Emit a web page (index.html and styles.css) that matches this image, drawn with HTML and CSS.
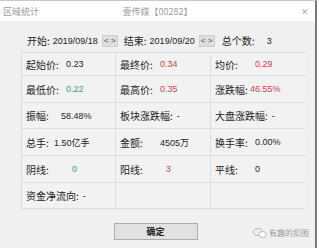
FILE: index.html
```html
<!DOCTYPE html>
<html lang="zh-CN">
<head>
    <meta charset="UTF-8">
    <title>区域统计</title>
    <link rel="stylesheet" href="styles.css">
</head>
<body>
<div class="window">
    <div class="titlebar">
        <span class="title-left">区域统计</span>
        <span class="title-mid">壹传媒【00282】</span>
        <span class="title-close">&#x2715;</span>
    </div>

    <div class="content">
        <div class="daterow">
            <span class="lbl">开始:</span>
            <span class="num date">2019/09/18</span>
            <span class="spin">&lt; &gt;</span>
            <span class="lbl end">结束:</span>
            <span class="num date">2019/09/20</span>
            <span class="spin">&lt; &gt;</span>
            <span class="lbl total">总个数:</span>
            <span class="num">3</span>
        </div>

        <div class="stats">
            <div class="cell r1"><span class="k">起始价:</span><span class="v">0.23</span></div>
            <div class="cell r1"><span class="k">最终价:</span><span class="v red">0.34</span></div>
            <div class="cell r1"><span class="k">均价:</span><span class="v red">0.29</span></div>

            <div class="cell"><span class="k">最低价:</span><span class="v green">0.22</span></div>
            <div class="cell"><span class="k">最高价:</span><span class="v red">0.35</span></div>
            <div class="cell"><span class="k">涨跌幅:</span><span class="v red wide">46.55%</span></div>

            <div class="cell"><span class="k">振幅:</span><span class="v wide">58.48%</span></div>
            <div class="cell"><span class="k">板块涨跌幅:</span><span class="v">-</span></div>
            <div class="cell"><span class="k">大盘涨跌幅:</span><span class="v">-</span></div>

            <div class="cell"><span class="k short">总手:</span><span class="v">1.50亿手</span></div>
            <div class="cell"><span class="k">金额:</span><span class="v">4505万</span></div>
            <div class="cell"><span class="k">换手率:</span><span class="v">0.00%</span></div>

            <div class="cell"><span class="k">阴线:</span><span class="v green pad">0</span></div>
            <div class="cell"><span class="k">阳线:</span><span class="v red pad">3</span></div>
            <div class="cell"><span class="k">平线:</span><span class="v">0</span></div>

            <div class="cell"><span class="k short">资金净流向:</span><span class="v">-</span></div>
            <div class="cell"></div>
            <div class="cell"></div>
        </div>

        <div class="footer">
            <button class="ok">确定</button>
        </div>
    </div>

    <div class="watermark">
        <svg width="14" height="10" viewBox="0 0 14 10">
            <ellipse cx="5" cy="4" rx="4.5" ry="3.5" fill="none" stroke="#b8b8b8" stroke-width="1"/>
            <ellipse cx="9.5" cy="6.5" rx="3.8" ry="3" fill="#fff" stroke="#b8b8b8" stroke-width="1"/>
        </svg>
        <span>有趣的扣图</span>
    </div>
</div>
</body>
</html>
```

FILE: styles.css
```css
body {
    margin: 0;
    font-family: 'Noto Sans CJK SC', sans-serif;
    font-size: 10px;
    color: #222;
}

.window {
    position: relative;
    width: 317px;
    height: 248px;
    background-color: #f0f0f0;
    border-right: 2px solid #7a7a7a;
    border-top: 1px solid #c8c8c8;
    box-sizing: border-box;
}

/* title bar */
.titlebar {
    height: 20px;
    background-color: #fff;
    display: grid;
    grid-template-columns: 1fr auto 1fr;
    align-items: center;
    color: #9a9a9a;
    font-size: 9px;
}

.title-left {
    padding-left: 3px;
}

.title-mid {
    color: #a0a0a0;
}

.title-close {
    justify-self: end;
    padding-right: 6px;
    font-size: 9px;
    color: #aaa;
}

.content {
    padding: 0 0 0 21px;
}

.num {
    font-family: 'Liberation Sans', sans-serif;
    font-size: 9px;
    color: #222;
}

/* date row */
.daterow {
    display: flex;
    align-items: center;
    height: 13px;
    margin-top: 13px;
    padding-left: 6px;
}

.date {
    margin-left: 3px;
}

.spin {
    width: 16px;
    height: 12px;
    margin-left: 4px;
    background-color: #dedede;
    border: 1px solid #cfcfcf;
    box-sizing: border-box;
    font-family: 'Liberation Sans', sans-serif;
    font-size: 8px;
    line-height: 10px;
    text-align: center;
    color: #444;
}

.end {
    margin-left: 6px;
}

.total {
    margin-left: 7px;
    width: 45px;
}

/* stats table */
.stats {
    display: grid;
    grid-template-columns: 93px 94px 95px;
    grid-template-rows: 22px 26px 25px 26px 26px 25px;
    gap: 1px;
    background-color: #dcdcdc;
    border: 1px solid #dcdcdc;
    width: 284px;
    margin-top: 5px;
    box-sizing: border-box;
}

.cell {
    background-color: #f2f2f2;
    display: flex;
    align-items: center;
    gap: 4px;
    padding-left: 4px;
}

.k {
    min-width: 36px;
    white-space: nowrap;
}

.k.short {
    min-width: 24px;
}

.v {
    font-family: 'Liberation Sans', 'Noto Sans CJK SC', sans-serif;
    font-size: 9px;
    color: #222;
    white-space: nowrap;
}

.v.wide {
    margin-left: -5px;
}

.v.pad {
    margin-left: 6px;
}

.red {
    color: #c9424a;
}

.green {
    color: #3f9e77;
}

/* button */
.footer {
    display: flex;
    justify-content: center;
    padding-right: 21px;
    margin-top: 14px;
}

.ok {
    width: 84px;
    height: 17px;
    margin: 0 0 0 -4px;
    padding: 0;
    background-color: #e1e1e1;
    border: 1px solid #adadad;
    font-family: 'Noto Sans CJK SC', sans-serif;
    font-size: 9px;
    font-weight: bold;
    color: #222;
}

.watermark {
    position: absolute;
    right: 6px;
    bottom: 10px;
    display: flex;
    align-items: center;
    gap: 2px;
    font-size: 8px;
    color: #9a9a9a;
}
```
